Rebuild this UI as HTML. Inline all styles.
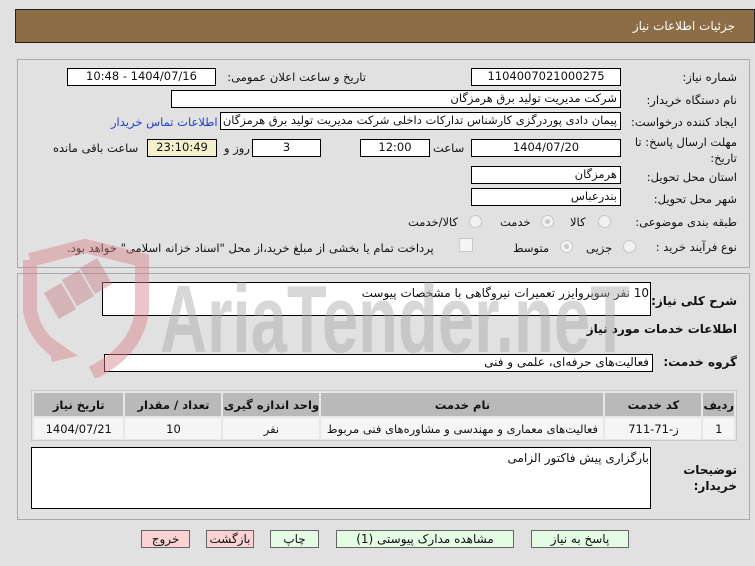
<!DOCTYPE html>
<html><head><meta charset="utf-8">
<style>
*{box-sizing:border-box;margin:0;padding:0}
body{width:755px;height:566px;background:#e1e1e1;position:relative;overflow:hidden;font-family:"DejaVu Sans","Liberation Sans",sans-serif;font-size:11.5px;color:#111}
.a{position:absolute}
.t{position:absolute;white-space:nowrap;direction:rtl}
.in{position:absolute;background:#fff;border:1px solid #000;white-space:nowrap;overflow:hidden;direction:rtl;padding:0 3px;line-height:15px}
.c{text-align:center}
.rad{position:absolute;width:13px;height:13px;border-radius:50%;border:1px solid #c8c8c8;background:#f2f2f2}
.rad.on::after{content:"";position:absolute;left:3px;top:3px;width:5px;height:5px;border-radius:50%;background:#c9c9c9}
.b{font-weight:bold}
.btn{position:absolute;height:18px;border:1px solid #666;text-align:center;line-height:16px;direction:rtl;font-size:12px}
.g{background:#e4fbe4}.p{background:#f9d3d3}
table{border-collapse:separate;border-spacing:2px}
</style></head><body>
<div class="a" style="left:15px;top:9px;width:740px;height:34px;background:#8c6d46;border:1px solid #222"></div>
<div class="t" style="right:20px;top:19px;color:#fff;font-size:12px">جزئیات اطلاعات نیاز</div>

<div class="a" style="left:17px;top:59px;width:733px;height:209px;border:1px solid #aaa"></div>
<div class="a" style="left:17px;top:273px;width:733px;height:247px;border:1px solid #aaa"></div>

<div class="t" style="right:18px;top:70px">شماره نیاز:</div>
<div class="in c" style="left:471px;top:68px;width:150px;height:18px">1104007021000275</div>
<div class="t" style="right:389px;top:70px">تاریخ و ساعت اعلان عمومی:</div>
<div class="in c" style="left:67px;top:68px;width:149px;height:18px">1404/07/16 - 10:48</div>

<div class="t" style="right:18px;top:93px">نام دستگاه خریدار:</div>
<div class="in" style="left:171px;top:90px;width:450px;height:18px">شرکت مدیریت تولید برق هرمزگان</div>

<div class="t" style="right:18px;top:115px">ایجاد کننده درخواست:</div>
<div class="in" style="left:220px;top:112px;width:401px;height:18px">پیمان دادی پوردرگزی کارشناس تدارکات داخلی شرکت مدیریت تولید برق هرمزگان</div>
<div class="t" style="left:111px;top:115px;color:#1a3fd6">اطلاعات تماس خریدار</div>

<div class="t" style="right:18px;top:134px;line-height:16px;text-align:right">مهلت ارسال پاسخ: تا<br>تاریخ:</div>
<div class="in c" style="left:471px;top:139px;width:150px;height:18px">1404/07/20</div>
<div class="t" style="left:433px;top:141px">ساعت</div>
<div class="in c" style="left:360px;top:139px;width:70px;height:18px">12:00</div>
<div class="in c" style="left:252px;top:139px;width:69px;height:18px">3</div>
<div class="t" style="left:224px;top:141px">روز و</div>
<div class="in c" style="left:147px;top:139px;width:70px;height:18px;background:#f4f0cb">23:10:49</div>
<div class="t" style="left:53px;top:141px">ساعت باقی مانده</div>

<div class="t" style="right:18px;top:170px">استان محل تحویل:</div>
<div class="in" style="left:471px;top:166px;width:150px;height:18px">هرمزگان</div>
<div class="t" style="right:18px;top:192px">شهر محل تحویل:</div>
<div class="in" style="left:471px;top:188px;width:150px;height:18px">بندرعباس</div>

<div class="t" style="right:18px;top:215px">طبقه بندی موضوعی:</div>
<div class="rad" style="left:598px;top:215px"></div><div class="t" style="left:570px;top:215px">کالا</div>
<div class="rad on" style="left:541px;top:215px"></div><div class="t" style="left:500px;top:215px">خدمت</div>
<div class="rad" style="left:469px;top:215px"></div><div class="t" style="left:408px;top:215px">کالا/خدمت</div>

<div class="t" style="right:18px;top:240px">نوع فرآیند خرید :</div>
<div class="rad" style="left:623px;top:240px"></div><div class="t" style="left:586px;top:241px">جزیی</div>
<div class="rad on" style="left:560px;top:240px"></div><div class="t" style="left:513px;top:241px">متوسط</div>
<div class="a" style="left:459px;top:238px;width:14px;height:14px;border:1px solid #c8c8c8;background:#f5f5f5"></div>
<div class="t" style="left:67px;top:241px">پرداخت تمام یا بخشی از مبلغ خرید،از محل "اسناد خزانه اسلامی" خواهد بود.</div>

<div class="t b" style="right:18px;top:294px;font-size:12px">شرح کلی نیاز:</div>
<div class="a" style="left:102px;top:282px;width:549px;height:34px;background:#fff;border:1px solid #000"></div>
<div class="t" style="right:106px;top:286px;font-size:12px">10 نفر سوپروایزر تعمیرات نیروگاهی با مشخصات پیوست</div>

<div class="t b" style="right:18px;top:322px;font-size:12px">اطلاعات خدمات مورد نیاز</div>
<div class="t b" style="right:18px;top:355px;font-size:12px">گروه خدمت:</div>
<div class="in" style="left:104px;top:354px;width:549px;height:18px;font-size:12px">فعالیت‌های حرفه‌ای، علمی و فنی</div>

<!-- watermark (on top, translucent) -->
<svg class="a" style="left:0;top:238px;pointer-events:none" width="660" height="140" viewBox="0 0 660 140">
<g opacity="0.45">
<path d="M30 22 L85 8 L142 22 L142 72 Q138 112 92 135" fill="none" stroke="#d98088" stroke-width="14"/>
<path d="M30 22 L30 72 Q34 98 58 114" fill="none" stroke="#d98088" stroke-width="14"/>
<path d="M46 96 L78 118 L52 124 Z" fill="#d98088"/>
<rect x="50" y="48" width="20" height="30" fill="#c77f86" transform="rotate(-30 60 63)"/>
<rect x="68" y="35" width="20" height="30" fill="#c77f86" transform="rotate(-30 78 50)"/>
<rect x="86" y="23" width="20" height="30" fill="#c77f86" transform="rotate(-30 96 38)"/>
<text x="160" y="114" font-family="Liberation Sans" font-size="96" font-weight="bold" fill="#a8a8a8" textLength="470" lengthAdjust="spacingAndGlyphs">AriaTender.neT</text>
</g>
</svg>

<div class="a" style="left:31px;top:390px;width:706px;height:51px;border:1px solid #c8c8c8;background:#e6e6e6"></div>
<table class="a" style="left:32px;top:391px;width:704px;direction:rtl;font-size:11.5px">
<tr style="background:#b9b9b9;font-weight:bold;height:23px;text-align:center">
<td style="width:27px">ردیف</td><td style="width:96px">کد خدمت</td><td style="width:282px">نام خدمت</td><td style="width:96px">واحد اندازه گیری</td><td style="width:96px">تعداد / مقدار</td><td>تاریخ نیاز</td></tr>
<tr style="background:#f5f5f5;height:21px;text-align:center">
<td>1</td><td>ز-71-711</td><td>فعالیت‌های معماری و مهندسی و مشاوره‌های فنی مربوط</td><td>نفر</td><td>10</td><td>1404/07/21</td></tr>
</table>

<div class="t b" style="right:18px;top:462px;font-size:12px;line-height:16px;text-align:right">توضیحات<br>خریدار:</div>
<div class="a" style="left:31px;top:447px;width:620px;height:62px;background:#fff;border:1px solid #000"></div>
<div class="t" style="right:106px;top:451px;font-size:12px">بارگزاری پیش فاکتور الزامی</div>

<div class="btn g" style="left:531px;top:530px;width:98px">پاسخ به نیاز</div>
<div class="btn g" style="left:336px;top:530px;width:178px">مشاهده مدارک پیوستی (1)</div>
<div class="btn g" style="left:270px;top:530px;width:49px">چاپ</div>
<div class="btn p" style="left:206px;top:530px;width:48px">بازگشت</div>
<div class="btn p" style="left:141px;top:530px;width:49px">خروج</div>
</body></html>
